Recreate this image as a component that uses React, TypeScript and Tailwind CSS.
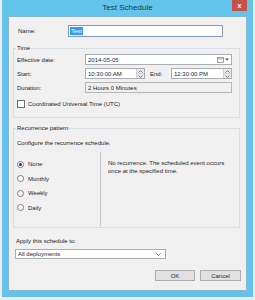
const Spinner = () => (
  <div className="flex h-full w-[8px] flex-col border-l border-[#d0d0d0] bg-[#eaeaea]">
    <div className="flex flex-1 items-center justify-center border-b border-[#d0d0d0]">
      <svg width="5" height="3" viewBox="0 0 5 3">
        <path d="M0.5 2.5 L2.5 0.5 L4.5 2.5" fill="none" stroke="#606060" strokeWidth="0.8" />
      </svg>
    </div>
    <div className="flex flex-1 items-center justify-center">
      <svg width="5" height="3" viewBox="0 0 5 3">
        <path d="M0.5 0.5 L2.5 2.5 L4.5 0.5" fill="none" stroke="#606060" strokeWidth="0.8" />
      </svg>
    </div>
  </div>
);

const Radio = ({ label, checked }: { label: string; checked?: boolean }) => (
  <div className="flex h-[14.5px] items-center pl-[1px]">
    <span className="flex h-[7px] w-[7px] items-center justify-center rounded-full border border-[#7a7a7a] bg-white">
      {checked && <span className="h-[3px] w-[3px] rounded-full bg-[#333]" />}
    </span>
    <span className="ml-[4px]">{label}</span>
  </div>
);

export default function App() {
  return (
    <div className="h-[300px] w-[255px] bg-[#ededed] pl-[2px] font-['Liberation_Sans',Arial,sans-serif] text-[6px] leading-[8px] text-[#1e1e1e]">
      <div className="flex h-[297px] w-[251px] flex-col bg-[#62c4ea] px-[6px] pb-[6px]">
        {/* title bar */}
        <div className="relative flex h-[16px] items-center justify-center">
          <span className="text-[8px] leading-[10px] text-[#1c3b50]">Test Schedule</span>
          <div className="absolute right-0 top-0 flex h-[11px] w-[15px] items-center justify-center bg-[#c75048] text-[7px] font-bold text-white">
            x
          </div>
        </div>

        <div className="flex-1 border border-[#8db6cc] bg-[#f0f0f0]">
          {/* name */}
          <div className="mt-[8px] flex h-[12px] items-center pl-[9px]">
            <span className="w-[50px]">Name:</span>
            <div className="flex h-[12px] w-[155px] items-center border border-[#7f9db9] bg-white px-[1px]">
              <span className="bg-[#3399ff] px-[1px] text-white">Test</span>
            </div>
          </div>

          {/* time group */}
          <fieldset className="ml-[4px] mt-[7px] w-[227px] border border-[#d5dfe5] pb-[9px] pl-[2px] pt-[2px]">
            <legend className="px-[1px]">Time</legend>
            <div className="flex h-[11px] items-center pl-[1px]">
              <span className="w-[68px]">Effective date:</span>
              <div className="flex h-[11px] w-[147px] items-center justify-between border border-[#abadb3] bg-white pl-[2px] pr-[2px]">
                <span>2014-05-05</span>
                <div className="flex items-center gap-[1px]">
                  <svg width="7" height="6" viewBox="0 0 7 6">
                    <rect x="0.5" y="0.5" width="6" height="5" fill="#fff" stroke="#8a8a8a" strokeWidth="0.8" />
                    <line x1="0.5" y1="1.8" x2="6.5" y2="1.8" stroke="#8a8a8a" strokeWidth="0.8" />
                  </svg>
                  <svg width="4" height="3" viewBox="0 0 4 3">
                    <path d="M0 0.5 L4 0.5 L2 2.5 Z" fill="#444" />
                  </svg>
                </div>
              </div>
            </div>
            <div className="mt-[3px] flex h-[11px] items-center pl-[1px]">
              <span className="w-[68px]">Start:</span>
              <div className="flex h-[11px] w-[60px] items-center justify-between border border-[#abadb3] bg-white pl-[2px]">
                <span>10:30:00 AM</span>
                <Spinner />
              </div>
              <span className="ml-[5px] w-[21px]">End:</span>
              <div className="flex h-[11px] w-[61px] items-center justify-between border border-[#abadb3] bg-white pl-[2px]">
                <span>12:30:00 PM</span>
                <Spinner />
              </div>
            </div>
            <div className="mt-[3px] flex h-[11px] items-center pl-[1px]">
              <span className="w-[68px]">Duration:</span>
              <div className="flex h-[11px] w-[147px] items-center border border-[#b5b5b5] bg-[#f0f0f0] pl-[2px]">
                <span>2 Hours 0 Minutes</span>
              </div>
            </div>
            <div className="mt-[7px] flex h-[8px] items-center pl-[1px]">
              <span className="h-[8px] w-[8px] border border-[#707070] bg-white" />
              <span className="ml-[3px]">Coordinated Universal Time (UTC)</span>
            </div>
          </fieldset>

          {/* recurrence group */}
          <fieldset className="ml-[4px] mt-[6px] w-[227px] border border-[#d5dfe5] pb-[1px] pl-[2px] pt-[7px]">
            <legend className="px-[1px]">Recurrence pattern</legend>
            <div className="pl-[1px]">Configure the recurrence schedule.</div>
            <div className="mt-[5px] flex h-[74px]">
              <div className="w-[85px] border-r border-[#c8c8c8] pt-[5px]">
                <Radio label="None" checked />
                <Radio label="Monthly" />
                <Radio label="Weekly" />
                <Radio label="Daily" />
              </div>
              <div className="pl-[7px] pt-[8px] leading-[7.6px]">
                No recurrence. The scheduled event occurs
                <br />
                once at the specified time.
              </div>
            </div>
          </fieldset>

          {/* apply */}
          <div className="ml-[7px] mt-[9px]">Apply this schedule to:</div>
          <div className="ml-[6px] mt-[4px] flex h-[10px] w-[151px] items-center justify-between border border-[#abadb3] bg-white pl-[2px] pr-[4px]">
            <span>All deployments</span>
            <svg width="5" height="3" viewBox="0 0 5 3">
              <path d="M0.5 0.5 L2.5 2.5 L4.5 0.5" fill="none" stroke="#555" strokeWidth="0.8" />
            </svg>
          </div>

          <div className="mr-[5px] mt-[11px] flex justify-end gap-[5px]">
            <button className="flex h-[11px] w-[40px] items-center justify-center border border-[#adadad] bg-[#e1e1e1]">
              OK
            </button>
            <button className="flex h-[11px] w-[41px] items-center justify-center border border-[#adadad] bg-[#e1e1e1]">
              Cancel
            </button>
          </div>
        </div>
      </div>
    </div>
  );
}
